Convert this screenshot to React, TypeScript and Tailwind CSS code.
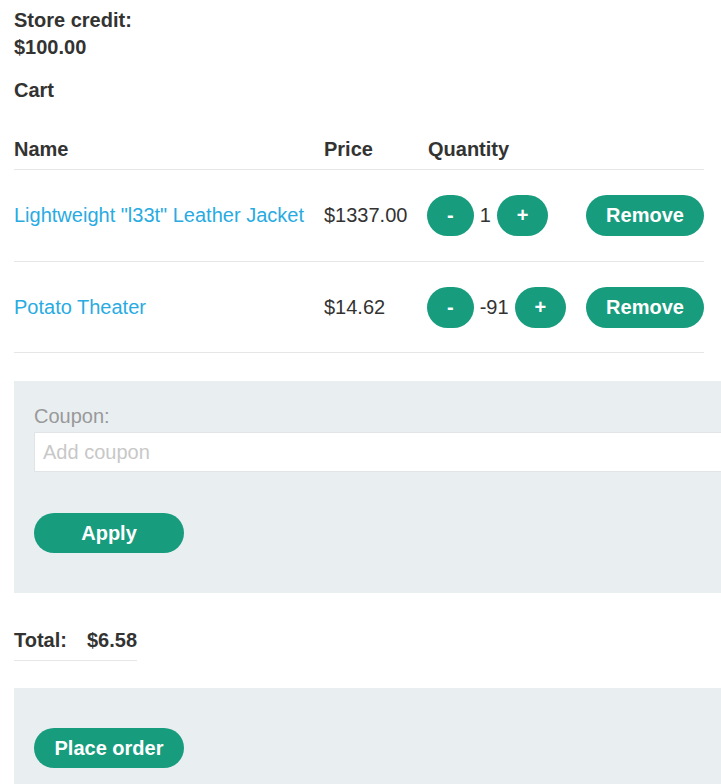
import React from "react";

const green = "bg-[#189c7e]";

function Btn({ children, className = "" }: { children: React.ReactNode; className?: string }) {
  return (
    <button
      className={`${green} text-white font-bold rounded-full h-[41px] px-5 leading-[23px] text-[20px] ${className}`}
    >
      {children}
    </button>
  );
}

export default function App() {
  const items = [
    { name: 'Lightweight "l33t" Leather Jacket', price: "$1337.00", qty: "1", h: "h-[92px]" },
    { name: "Potato Theater", price: "$14.62", qty: "-91", h: "h-[91px]" },
  ];
  return (
    <div
      className="w-[721px] h-[784px] overflow-hidden bg-white text-[#333332] text-[20px] leading-[23px]"
      style={{ fontFamily: '"Liberation Sans", Arial, sans-serif' }}
    >
      <div className="pl-[14px]">
        <div className="pt-[7px] font-bold leading-[27px]">
          <div>Store credit:</div>
          <div>$100.00</div>
        </div>
        <div className="mt-[18px] font-bold">Cart</div>

        <div className="mt-[36px] w-[690px]">
          <div className="grid grid-cols-[310px_104px_158px_118px] font-bold pb-[8px] border-b border-[#e6e6e6]">
            <div>Name</div>
            <div>Price</div>
            <div>Quantity</div>
            <div></div>
          </div>
          {items.map((it) => (
            <div
              key={it.name}
              className={`grid grid-cols-[310px_104px_158px_118px] items-center ${it.h} border-b border-[#e6e6e6]`}
            >
              <div className="text-[#29abe2]">{it.name}</div>
              <div>{it.price}</div>
              <div className="flex items-center gap-[6px] -ml-[1px]">
                <Btn>-</Btn>
                <span>{it.qty}</span>
                <Btn>+</Btn>
              </div>
              <div>
                <Btn className="w-[118px]">Remove</Btn>
              </div>
            </div>
          ))}
        </div>

        <div className="mt-[28px] w-[720px] bg-[#e9eef1] pl-[20px] pt-[24px] pb-[40px]">
          <div className="text-[#999999]">Coupon:</div>
          <div className="mt-[4px] h-[40px] bg-white border border-[#e1e4e6] flex items-center pl-[8px] text-[#c8c8c8]">
            Add coupon
          </div>
          <div className="mt-[41px]">
            <Btn className="min-w-[150px] !h-[40px]">Apply</Btn>
          </div>
        </div>

        <div className="mt-[36px] inline-flex font-bold pb-[8px] border-b border-[#e6e6e6]">
          <span className="pr-[20px]">Total:</span>
          <span>$6.58</span>
        </div>

        <div className="mt-[27px] w-[720px] h-[200px] bg-[#e9eef1] pl-[20px] pt-[40px]">
          <Btn className="min-w-[150px] !h-[40px]">Place order</Btn>
        </div>
      </div>
    </div>
  );
}
